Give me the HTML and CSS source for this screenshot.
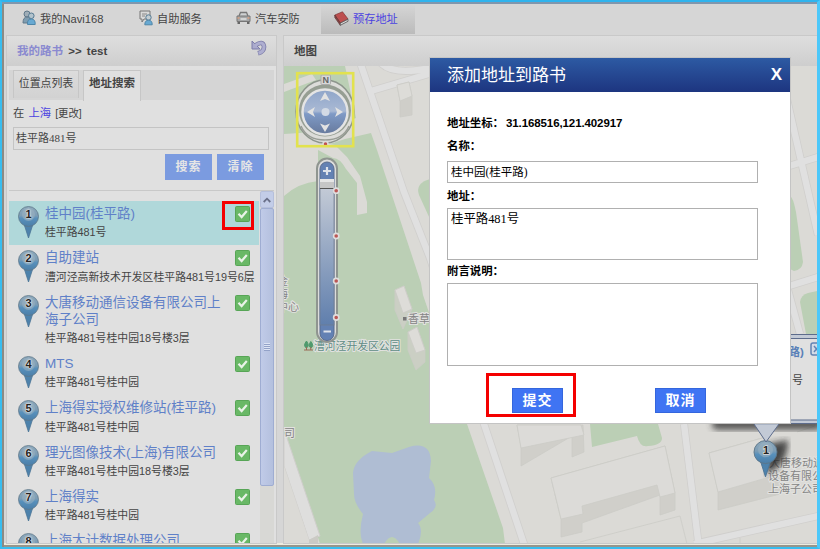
FILE: index.html
```html
<!DOCTYPE html>
<html lang="zh-CN">
<head>
  <meta charset="UTF-8">
  <title>预存地址 - Navi168</title>
  <link rel="stylesheet" href="styles.css">
</head>
<body>
  <svg class="defs" width="0" height="0">
    <defs>
      <linearGradient id="pinFill" x1="0" y1="0" x2="0" y2="1">
        <stop offset="0" stop-color="#8eaabd"/>
        <stop offset="0.45" stop-color="#7d9db5"/>
        <stop offset="0.6" stop-color="#5890bb"/>
        <stop offset="1" stop-color="#4b7ea8"/>
      </linearGradient>
      <linearGradient id="ball" x1="0" y1="0" x2="0" y2="1">
        <stop offset="0" stop-color="#8fa5c9"/>
        <stop offset="0.48" stop-color="#a9b9d4"/>
        <stop offset="0.54" stop-color="#7f9ac6"/>
        <stop offset="1" stop-color="#66799c"/>
      </linearGradient>
      <linearGradient id="bar" x1="0" y1="0" x2="0" y2="1">
        <stop offset="0" stop-color="#c3cad6"/>
        <stop offset="1" stop-color="#607fad"/>
      </linearGradient>
      <filter id="soft"><feGaussianBlur stdDeviation="3"/></filter>
      <symbol id="pin" viewBox="0 0 21 33">
        <path d="M6 18 L10.5 32 L15 18 Z" fill="#4d82ac" stroke="#4b7596" stroke-width=".8"/>
        <circle cx="10.5" cy="10.5" r="10" fill="url(#pinFill)" stroke="#5d7688" stroke-width=".8"/>
        <circle cx="10.5" cy="8.5" r="6.5" fill="#9db3c1" opacity=".55"/>
      </symbol>
      <symbol id="check" viewBox="0 0 15 16">
        <rect x=".5" y=".5" width="14" height="15" rx="1" fill="#69b866" stroke="#57a556"/>
        <path d="M3.5 7.8 L6.6 11 L11.8 5" fill="none" stroke="#e9f2e8" stroke-width="2.2"/>
      </symbol>
    </defs>
  </svg>

  <div class="window">
    <ul class="nav">
      <li class="nav-my">
        <svg width="14" height="16" viewBox="0 0 14 16">
          <circle cx="5" cy="4" r="3" fill="#9fadb7" stroke="#60788a"/>
          <path d="M1 13 Q1 7 5 7 Q9 7 9 13 Z" fill="#7f9db1" stroke="#60788a"/>
          <circle cx="9.3" cy="5.8" r="2.8" fill="#b3c3cc" stroke="#557a93"/>
          <path d="M5.5 14.5 Q5 9 9.3 9 Q13.5 9 13.2 14.5 Z" fill="#68a9d2" stroke="#4e86a9"/>
        </svg>
        我的Navi168
      </li>
      <li class="nav-self">
        <svg width="14" height="16" viewBox="0 0 14 16">
          <path d="M1 1 H11 V9 H5 L3 12 V9 H1 Z" fill="#d9d9d9" stroke="#777"/>
          <path d="M3 4 H8 M3 6 H6" stroke="#888"/>
          <circle cx="9.5" cy="7.5" r="2.7" fill="#c3cdd2" stroke="#557a93"/>
          <path d="M5.8 14.8 Q5.8 10.2 9.5 10.2 Q13.3 10.2 13.2 14.8 Z" fill="#68a9d2" stroke="#4e86a9"/>
        </svg>
        自助服务
      </li>
      <li class="nav-car">
        <svg width="15" height="14" viewBox="0 0 15 14">
          <path d="M3 5 L4.5 1.5 H10.5 L12 5" fill="#cfd2d3" stroke="#777" stroke-width="1.3"/>
          <path d="M1 5 H14 V10.5 H1 Z" fill="#a4a6a7" stroke="#777"/>
          <path d="M4.5 8 H10.5" stroke="#e0e0e0" stroke-width="1.6"/>
          <path d="M1.5 7 H3.5 M11.5 7 H13.5" stroke="#d9a080" stroke-width="1.6"/>
          <path d="M1.5 11 H4 V13 H1.5 Z M11 11 H13.5 V13 H11 Z" fill="#666"/>
        </svg>
        汽车安防
      </li>
      <li class="nav-saved active">
        <svg width="15" height="15" viewBox="0 0 15 15">
          <path d="M.8 4 L8.5 .8 L14 8 L6.3 12 Z" fill="#bd4f4f" stroke="#7e3737" stroke-width=".7"/>
          <path d="M.8 4 L.8 6.5 L6.3 14.3 L6.3 12 Z" fill="#8d4444" stroke="#5d3535" stroke-width=".7"/>
          <path d="M6.3 12.2 L14 8.3 V10.3 L6.3 14.3 Z" fill="#ddd" stroke="#555" stroke-width=".8"/>
        </svg>
        预存地址
      </li>
    </ul>

    <div class="main">
      <div class="sidebar">
        <div class="panel-title">
          <span><a>我的路书</a> <b>&gt;&gt;</b> <b class="book">test</b></span>
          <svg width="16" height="16" viewBox="0 0 16 16">
            <path d="M4 5.5 Q12 0 13 6.5 Q13.300 11.500 7 13.300" fill="none" stroke="#7d7da9" stroke-width="4.600"/>
            <path d="M1 1 V9 H9 Z" fill="#aaaacd" stroke="#7d7da9"/>
            <path d="M4 5.500 Q12 0 13 6.500 Q13.300 11.500 7.500 13.200" fill="none" stroke="#aeaed0" stroke-width="3"/>
          </svg>
        </div>
        <div class="tabs">
          <div class="tab">位置点列表</div>
          <div class="tab current">地址搜索</div>
        </div>
        <div class="search">
          <div class="city">在 <a>上海</a> <span>[更改]</span></div>
          <input class="keyword" type="text" value="桂平路481号">
          <div class="search-buttons">
            <button>搜索</button>
            <button>清除</button>
          </div>
        </div>
        <div class="results">
          <ul class="list">
            <li class="item selected">
              <div class="pin"><svg><use href="#pin"/></svg><span>1</span></div>
              <div class="info"><h3>桂中园(桂平路)</h3><p>桂平路481号</p></div>
              <svg class="check"><use href="#check"/></svg>
            </li>
            <li class="item">
              <div class="pin"><svg><use href="#pin"/></svg><span>2</span></div>
              <div class="info"><h3>自助建站</h3><p>漕河泾高新技术开发区桂平路481号19号6层</p></div>
              <svg class="check"><use href="#check"/></svg>
            </li>
            <li class="item">
              <div class="pin"><svg><use href="#pin"/></svg><span>3</span></div>
              <div class="info"><h3>大唐移动通信设备有限公司上海子公司</h3><p>桂平路481号桂中园18号楼3层</p></div>
              <svg class="check"><use href="#check"/></svg>
            </li>
            <li class="item">
              <div class="pin"><svg><use href="#pin"/></svg><span>4</span></div>
              <div class="info"><h3>MTS</h3><p>桂平路481号桂中园</p></div>
              <svg class="check"><use href="#check"/></svg>
            </li>
            <li class="item">
              <div class="pin"><svg><use href="#pin"/></svg><span>5</span></div>
              <div class="info"><h3>上海得实授权维修站(桂平路)</h3><p>桂平路481号桂中园</p></div>
              <svg class="check"><use href="#check"/></svg>
            </li>
            <li class="item">
              <div class="pin"><svg><use href="#pin"/></svg><span>6</span></div>
              <div class="info"><h3>理光图像技术(上海)有限公司</h3><p>桂平路481号桂中园18号楼3层</p></div>
              <svg class="check"><use href="#check"/></svg>
            </li>
            <li class="item">
              <div class="pin"><svg><use href="#pin"/></svg><span>7</span></div>
              <div class="info"><h3>上海得实</h3><p>桂平路481号桂中园</p></div>
              <svg class="check"><use href="#check"/></svg>
            </li>
            <li class="item">
              <div class="pin"><svg><use href="#pin"/></svg><span>8</span></div>
              <div class="info"><h3>上海大计数据处理公司</h3></div>
              <svg class="check"><use href="#check"/></svg>
            </li>
          </ul>
          <div class="scrollbar">
            <div class="scroll-up"><svg width="8" height="6" viewBox="0 0 8 6"><path d="M.7 5 L4 1.7 L7.3 5" fill="none" stroke="#6a7089" stroke-width="1.8"/></svg></div>
            <div class="scroll-thumb"><i></i></div>
          </div>
        </div>
      </div>

      <div class="map-panel">
        <div class="panel-title">地图</div>
        <svg class="map" viewBox="284 66 533 478" width="533" height="478">
          <rect x="284" y="66" width="533" height="478" fill="#dbdad6"/>
          <!-- parks -->
          <g fill="#bbcfb5">
            <path d="M284 66 H345 L356 118 L330 128 L300 133 L284 134 Z"/>
            <path d="M284 196 Q298 183 318 181 V148 L345 139 L371 133 L377 150 L421 283 L423 295 L467 424 L503 528 L505 544 H320 L287 438 L284 434 Z"/>
            <path d="M430 179 Q415 183 419 195 L430 219 Z"/>
            <path d="M590 424 L592 447 L637 436 Q640 448 648 446 Q662 445 662 438 L658 424 Z"/>
            <path d="M790 196 Q793 197 796 212 L803 262 Q802 270 794 271 L790 269 Z"/>
            <path d="M800 302 Q801 295 808 293 L817 291 V334 H806 Z"/>
          </g>
          <path d="M284 84 L312 74 L316 80 L284 92 Z" fill="#dbdad6"/>
          <path d="M318 150 L333 158 Q340 158 346 169 L357 183 V215 L367 213 V202 L360 176 L347 157 L335 145 L318 142 Z" fill="#dbdad6"/>
          <path d="M353 473 Q354 460 372 451 L392 453 L409 447 Q430 441 431 461 L429 478 Q438 486 434 500 Q439 507 430 513 L418 523 Q424 530 418 544 H400 Q392 530 384 544 H363 Q358 533 363 514 Q354 503 354 494 Z" fill="#afbdd3"/>
          <!-- roads -->
          <g fill="none" stroke="#d0cfcd" stroke-width="8">
            <path d="M360 62 L404 192 L430 258 L484 424 L526 550"/>
            <path d="M371 91 L432 73 M380 62 Q392 76 430 68"/>
            <path d="M684 424 L698 540 M818 516 L694 544"/>
            <path d="M786 95 L818 235 M786 167 L818 157 M786 287 L818 277 M788 290 L800 334"/>
          </g>
          <g fill="none" stroke="#e0e0e0" stroke-width="6.400">
            <path d="M360 62 L404 192 L430 258 L484 424 L526 550"/>
            <path d="M371 91 L432 73 M380 62 Q392 76 430 68"/>
            <path d="M684 424 L698 540 M818 516 L694 544"/>
            <path d="M786 95 L818 235 M786 167 L818 157 M786 287 L818 277 M788 290 L800 334"/>
          </g>
          <path d="M284 434 L287 438 L320 536 L309 540 L284 466 Z" fill="#dededd" stroke="#cfcecb"/>
          <path d="M284 466 L309 540 V544 H284 Z" fill="#dbdad6"/>
          <path d="M309 540 L318 535 V544 H309 Z" fill="#cbcac5"/>
          <!-- buildings -->
          <g stroke="#cccbc7" stroke-width=".8">
            <path d="M397 85 L409 82 L412 96 V115 L400 117 V101 Z" fill="#cfcec9"/>
            <path d="M397 85 L409 82 L412 96 L400 101 Z" fill="#dddcd8"/>
            <path d="M395 290 L404 286 L412 309 L403 329 L395 310 Z" fill="#cbcfc4"/>
            <path d="M395 290 L404 286 L412 309 L403 313 Z" fill="#dddcd8"/>
            <path d="M408 332 L417 327 L425 350 V362 L416 370 L408 350 Z" fill="#cbcfc4"/>
            <path d="M408 332 L417 327 L425 350 L416 353 Z" fill="#dddcd8"/>
            <path d="M517 425 H583 L584 452 L572 457 V436 L521 466 V447 Z" fill="#d0cfca"/>
            <path d="M517 425 H581 L584 435 L521 448 Z" fill="#dcdbd8"/>
            <path d="M551 478 L665 446 L675 493 V510 L660 515 V495 L582 523 V532 L561 537 V519 Z" fill="#d0cfca"/>
            <path d="M551 478 L665 446 L675 493 L660 497 L657 485 L582 506 L583 514 L561 519 Z" fill="#dcdbd8"/>
            <path d="M709 453 L766 437 L780 474 V494 L718 510 V492 Z" fill="#d0cfca"/>
            <path d="M709 453 L766 437 L780 474 L718 492 Z" fill="#dcdbd8"/>
            <path d="M580 542 L680 516 L687 544 M740 538 V544 M797 432 L815 426" fill="none"/>
          </g>
          <!-- labels -->
          <g class="map-label">
            <text x="277" y="285">金</text>
            <text x="277" y="298">海</text>
            <text x="277" y="311">中心</text>
            <text x="284" y="437">司</text>
            <text x="408" y="323">香草</text>
            <text class="park" x="314" y="350">漕河泾开发区公园</text>
            <text x="769" y="467">大唐移动通</text>
            <text x="768" y="480">设备有限公</text>
            <text x="768" y="493">上海子公司</text>
          </g>
          <rect x="403" y="317" width="3.5" height="3.5" fill="#777"/>
          <path d="M306.500 341 Q302.500 346 306.500 348 Q310 346 306.500 341 M310.800 341.500 Q307.500 346 310.800 348 Q314.500 346 310.800 341.500" fill="#4f9a6d" stroke="#4f9a6d"/>
          <path d="M304 350 H313 M306.500 347 V350 M310.800 347 V350" stroke="#9a6a55"/>

          <!-- bubble of the selected place -->
          <rect x="712" y="418" width="110" height="12" rx="5" fill="#333" opacity=".75" filter="url(#soft)"/>
          <path d="M768 444 L788 440 Q788 466 766 474 Z" fill="#222" opacity=".8" filter="url(#soft)"/>
          <rect x="700" y="334.500" width="130" height="89" rx="4" fill="#c3cad6" stroke="#5d6c8c"/>
          <rect x="704" y="338.500" width="126" height="81.500" fill="#e0e0e0" stroke="#5d6c8c"/>
          <text class="bubble-title" x="788.500" y="356">路)</text>
          <rect x="811" y="343" width="13" height="12" rx="2" fill="#d4dbe6" stroke="#6283b3" stroke-width="1.5"/>
          <path d="M814 346 L819 352 M819 346 L814 352" stroke="#6283b3" stroke-width="1.5"/>
          <text class="bubble-text" x="792" y="384">号</text>
          <use href="#pin" x="752.500" y="440" width="26" height="38"/>
          <path d="M754 424 H779 L766 442 Z" fill="#c3cad6" stroke="#5d6c8c"/>
          <path d="M755 423.500 H778" stroke="#c3cad6" stroke-width="2"/>
          <text class="bubble-num" x="763" y="454">1</text>

          <!-- compass -->
          <ellipse cx="325" cy="111.500" rx="29" ry="31.500" fill="#dcdcd9" stroke="#8d958c" stroke-width="1.500"/>
          <circle cx="325" cy="110.500" r="26" fill="#969e93"/>
          <path d="M301 126 Q307 140 325 140 Q343 140 349 126" fill="none" stroke="#999d96" stroke-width="1.500"/>
          <circle cx="325" cy="112" r="22.500" fill="url(#ball)" stroke="#e4e4e4" stroke-width="2.500"/>
          <path d="M325 92 L330 101 L325 99 L320 101 Z M325 132 L330 123.500 L325 125.500 L320 123.500 Z M307 112 L315 107 L313 112 L315 117 Z M343 112 L335 107 L337 112 L335 117 Z" fill="#e2e2e2"/>
          <circle cx="325.500" cy="112" r="4" fill="#d3dae5"/>
          <rect x="321" y="75" width="9.500" height="9.500" rx="1" fill="#d8d8d8" stroke="#aaa"/>
          <text class="north" x="325.800" y="83" text-anchor="middle">N</text>
          <circle cx="325.500" cy="144" r="2.500" fill="#c0504f" stroke="#ddd" stroke-width="1.500"/>
          <rect x="297.200" y="73.200" width="56" height="73" fill="none" stroke="#e2e24e" stroke-width="2.600"/>

          <!-- zoom slider -->
          <rect x="317" y="158.500" width="20" height="183.500" rx="10" fill="#dcdcdc" stroke="#8f9590" stroke-width="2"/>
          <rect x="320" y="162" width="14" height="178.500" rx="7" fill="#6381b3" stroke="#596c8e"/>
          <rect x="320" y="188" width="14" height="137" fill="url(#bar)" stroke="#6f7b8d" stroke-width=".7"/>
          <rect x="320" y="179" width="14" height="9" fill="#c6c6c6"/>
          <path d="M320 180.500 H334" stroke="#e5e5e5" stroke-width="3"/>
          <path d="M320 188.500 H334" stroke="#555"/>
          <path d="M323 171 H331 M327 167 V175 M323.500 331.500 H331" stroke="#dde2ea" stroke-width="2.200"/>
          <g fill="#bb5755" stroke="#dedede" stroke-width="1.600">
            <circle cx="336.200" cy="190.700" r="2.600"/>
            <circle cx="336.200" cy="236" r="2.600"/>
            <circle cx="336.200" cy="281" r="2.600"/>
            <circle cx="336.200" cy="317.500" r="2.600"/>
          </g>
        </svg>
      </div>
    </div>
  </div>

  <div class="mark mark-check"></div>

  <div class="dialog">
    <div class="dialog-head">
      <span>添加地址到路书</span>
      <b>X</b>
    </div>
    <div class="dialog-body">
      <div class="coord">地址坐标<i>：</i><span>31.168516,121.402917</span></div>
      <label>名称<i>：</i></label>
      <input type="text" value="桂中园(桂平路)">
      <label>地址<i>：</i></label>
      <textarea class="address">桂平路481号</textarea>
      <label>附言说明<i>：</i></label>
      <textarea class="remark"></textarea>
      <div class="dialog-buttons">
        <button>提交</button>
        <button>取消</button>
      </div>
    </div>
    <div class="mark mark-submit"></div>
  </div>
</body>
</html>
```
FILE: styles.css
```css
* {
  box-sizing: border-box;
}

body {
  margin: 0;
  width: 820px;
  height: 549px;
  overflow: hidden;
  position: relative;
  background: #d6d6d6;
  font-family: "Liberation Sans", "Noto Sans CJK SC", sans-serif;
  font-size: 11px;
  color: #444;
}

ul, h3, p {
  margin: 0;
  padding: 0;
  list-style: none;
}

.defs {
  position: absolute;
}

.window {
  height: 549px;
  border: 2px solid #38bdf0;
  border-top-color: #2fb4ee;
  border-right: 3px solid #4cc8fa;
  padding: 2px 0 0 4px;
  box-shadow: inset 0 2px 0 #7f97ae, inset 2px 0 0 #8b8b85, inset 0 -2px 0 #96968c, inset 0 -4px 0 #eeece0;
}

/* top menu */
.nav {
  display: flex;
  height: 30px;
}

.nav li {
  display: flex;
  align-items: center;
  gap: 4px;
  height: 30px;
  padding-bottom: 2px;
  font-size: 11.2px;
  white-space: nowrap;
}

.nav-my {
  width: 117px;
  padding-left: 16px;
}

.nav-self {
  width: 97px;
  padding-left: 16px;
}

.nav-car {
  width: 101px;
  padding-left: 16px;
}

.nav .nav-saved {
  width: 94px;
  padding-left: 13px;
}

.nav .active {
  color: #4b43e0;
  background: linear-gradient(#d6d6d6, #bbb);
}

.main {
  display: flex;
  gap: 6px;
  height: 509px;
  margin-top: 1px;
}

.sidebar {
  width: 271px;
  border: 1px solid #c9c9c9;
  background: #e0e0e0;
  display: flex;
  flex-direction: column;
}

.panel-title {
  height: 30px;
  flex: none;
  display: flex;
  justify-content: space-between;
  align-items: center;
  padding: 0 9px 2px 10px;
  font-size: 11.5px;
  font-weight: bold;
  background: linear-gradient(#dedede, #cecece);
}

.panel-title a {
  color: #8a8ad0;
  margin-right: 2px;
}

.panel-title svg {
  margin-bottom: 4px;
}

.book {
  margin-left: 2px;
}

.tabs {
  display: flex;
  align-items: flex-start;
  gap: 4px;
  height: 30px;
  margin: 4px 2px 0;
  padding-left: 4px;
  background: #d5d5d5;
}

.tab {
  height: 28px;
  width: 66px;
  line-height: 25px;
  text-align: center;
  font-size: 10.9px;
  border: 1px solid #c6c6c6;
  border-bottom: none;
  background: linear-gradient(#dcdcdc, #d2d2d2);
}

.tab.current {
  width: 58px;
  height: 31px;
  font-size: 11.5px;
  font-weight: bold;
  background: #e0e0e0;
}

.search {
  margin: 0 2px;
  padding: 5px 5px 0 4px;
  height: 91px;
  border-bottom: 1px solid #c8c8c8;
}

.city {
  height: 22px;
  line-height: 17px;
  font-size: 11.3px;
}

.city a {
  color: #4b43e0;
  margin: 0 1px;
}

.city span {
  font-size: 10.4px;
}

.keyword {
  display: block;
  width: 256px;
  height: 23px;
  padding: 0 2px 3px;
  border: 1px solid #c4c4c4;
  background: #e0e0e0;
  color: #444;
  font-family: "Liberation Serif", "Noto Sans CJK SC", serif;
  font-size: 11px;
}

.search-buttons {
  display: flex;
  justify-content: flex-end;
  gap: 5px;
  padding: 4px 5px 0 0;
}

.search-buttons button {
  width: 47px;
  height: 26px;
  padding: 0 0 3px;
  border: none;
  background: #7b9be0;
  color: #e6e6e6;
  font-family: inherit;
  font-size: 12px;
  font-weight: bold;
  letter-spacing: 1px;
}

/* search results */
.results {
  display: flex;
  flex: 1;
  min-height: 0;
  overflow: hidden;
  margin-left: 2px;
}

.list {
  width: 250px;
  padding-top: 10px;
  flex: none;
}

.item {
  display: flex;
  padding: 4px 9px 3px;
  position: relative;
}

.item.selected {
  background: #b0d8da;
}

.pin {
  width: 21px;
  height: 33px;
  margin-top: 1px;
  margin-bottom: -4px;
  position: relative;
}

.pin svg {
  width: 21px;
  height: 33px;
}

.pin span {
  position: absolute;
  left: 0;
  top: 1px;
  width: 21px;
  text-align: center;
  font-size: 11px;
  line-height: 14px;
  font-weight: bold;
  color: #222;
  text-shadow: 0 0 1px #eee, 0 0 2px #eee, 0 0 2px #eee;
}

.info {
  width: 177px;
  margin-left: 6px;
}

.info h3 {
  font-size: 13.5px;
  font-weight: normal;
  line-height: 17.3px;
  color: #5f80c8;
}

.info p {
  font-size: 10.85px;
  line-height: 20px;
  white-space: nowrap;
}

.check {
  width: 15px;
  height: 16px;
  margin: 1px 0 0 13px;
  flex: none;
}

.scrollbar {
  width: 14px;
  margin-left: 1px;
  background: #d8d8d5;
}

.scroll-up {
  height: 17px;
  border: 1px solid #b5bfdb;
  border-radius: 2px;
  background: #c3cde8;
  display: flex;
  align-items: center;
  justify-content: center;
}

.scroll-thumb {
  height: 278px;
  border: 1px solid #9fadd2;
  border-radius: 2px;
  background: linear-gradient(90deg, #c0cbe8, #b4c0de);
  display: flex;
  align-items: center;
  justify-content: center;
}

.scroll-thumb i {
  width: 6px;
  height: 8px;
  background: repeating-linear-gradient(#dde4f4 0 1px, #93a2c8 1px 2px);
}

/* map */
.map-panel {
  flex: 1;
  min-width: 0;
  border: 1px solid #c9c9c9;
  border-right: none;
  overflow: hidden;
}

.map {
  display: block;
}

.map-label {
  font-size: 11px;
  fill: #858585;
  stroke: #e2e2e0;
  stroke-width: 2px;
  paint-order: stroke;
}

.map-label .park {
  fill: #5f8d86;
  font-size: 10.8px;
}

.bubble-title {
  font-size: 11.5px;
  font-weight: bold;
  fill: #5a80b8;
}

.bubble-text {
  font-size: 11px;
  fill: #444;
}

.bubble-num {
  font-size: 11px;
  font-weight: bold;
  fill: #222;
  stroke: #ddd;
  stroke-width: 1.5px;
  paint-order: stroke;
}

.north {
  font-size: 9px;
  font-weight: bold;
  fill: #666;
}

/* dialog */
.dialog {
  position: absolute;
  left: 429px;
  top: 57px;
  width: 362px;
  height: 367px;
  border: 1px solid #c4c4c4;
  background: #fff;
  color: #000;
}

.dialog-head {
  height: 34px;
  display: flex;
  justify-content: space-between;
  align-items: center;
  padding: 0 8px 3px 17px;
  background: linear-gradient(#2d5aa3, #1d3580);
  color: #fff;
  font-size: 17px;
}

.dialog-head b {
  padding-top: 3px;
}

.dialog-body {
  padding: 20px 31px 0 17px;
}

.coord,
.dialog-body label {
  display: block;
  font-size: 11.4px;
  font-weight: bold;
  line-height: 22px;
}

/* colon centred in its square */
.dialog-body i {
  font-family: "Noto Sans CJK TC", sans-serif;
  font-style: normal;
  line-height: 1;
}

.coord {
  height: 23px;
}

.coord span {
  margin-left: 2px;
  font-size: 11.5px;
  letter-spacing: -0.1px;
}

.dialog-body input,
.dialog-body textarea {
  display: block;
  width: 311px;
  border: 1px solid #b0b0b0;
  border-radius: 0;
  padding: 1px 3px;
  font-family: "Liberation Serif", "Noto Sans CJK SC", serif;
  font-size: 12px;
  resize: none;
}

.dialog-body input {
  height: 22px;
  margin: 4px 0 2px;
  padding-bottom: 4px;
  font-size: 11.5px;
}

.dialog-body .address {
  height: 52px;
  margin: 1px 0 0;
  padding-top: 0;
  font-size: 12.4px;
}

.dialog-body .remark {
  height: 83px;
  margin: 1px 0 0;
}

.dialog-buttons {
  display: flex;
  gap: 92px;
  padding: 22px 0 0 65px;
}

.dialog-buttons button {
  width: 51px;
  height: 25px;
  padding: 0 0 4px;
  border: 1px solid #3466dd;
  background: #3f74f3;
  color: #fff;
  font-family: inherit;
  font-size: 14px;
  font-weight: bold;
  letter-spacing: 1px;
}

/* red boxes round the controls to click */
.mark {
  position: absolute;
  border: 3px solid #f40000;
}

.mark-check {
  left: 222px;
  top: 201px;
  width: 32px;
  height: 29px;
}

.mark-submit {
  left: 56px;
  top: 315px;
  width: 90px;
  height: 44px;
}
```
